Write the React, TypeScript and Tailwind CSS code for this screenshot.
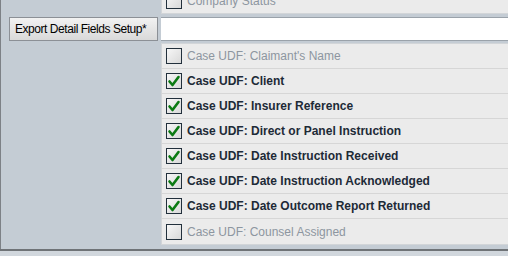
import React from "react";

type Field = { label: string; checked: boolean };

const fields: Field[] = [
  { label: "Case UDF: Claimant's Name", checked: false },
  { label: "Case UDF: Client", checked: true },
  { label: "Case UDF: Insurer Reference", checked: true },
  { label: "Case UDF: Direct or Panel Instruction", checked: true },
  { label: "Case UDF: Date Instruction Received", checked: true },
  { label: "Case UDF: Date Instruction Acknowledged", checked: true },
  { label: "Case UDF: Date Outcome Report Returned", checked: true },
  { label: "Case UDF: Counsel Assigned", checked: false },
];

function CheckBox({ checked }: { checked: boolean }) {
  return (
    <div className="w-[16px] h-[16px] shrink-0 border border-[#22303c] bg-gradient-to-br from-[#f7f7f7] to-[#d9d9d9] flex items-center justify-center">
      {checked && (
        <svg width="14" height="14" viewBox="0 0 14 14">
          <path d="M2.5 7.5 L5.5 11 L11.5 3" fill="none" stroke="#0b7a12" strokeWidth="2.6" strokeLinecap="round" strokeLinejoin="round" />
        </svg>
      )}
    </div>
  );
}

function Row({ label, checked, last }: Field & { last?: boolean }) {
  return (
    <div className={`h-[25px] flex items-center pl-[4px] ${last ? "" : "border-b border-[#d6d6d6]"}`}>
      <CheckBox checked={checked} />
      <span className={`ml-[5px] text-[12px] whitespace-nowrap ${checked ? "font-bold text-[#1d2a37]" : "text-[#8d96a0]"}`}>
        {label}
      </span>
    </div>
  );
}

export default function App() {
  return (
    <div className="w-[508px] h-[256px] overflow-hidden bg-[#c4ccd4] flex flex-col font-['Liberation_Sans',Arial,sans-serif]">
      <div className="h-[249px] shrink-0 border-l border-[#7d8186] flex flex-col">
        <div className="flex -mt-[12px]">
          <div className="w-[160px] shrink-0" />
          <div className="w-[360px] shrink-0 bg-[#ebebeb] border-l border-b border-[#d2d5d8]">
            <div className="h-[25px] flex items-center pl-[4px]">
              <CheckBox checked={false} />
              <span className="ml-[5px] text-[12px] text-[#8d96a0] whitespace-nowrap">Company Status</span>
            </div>
          </div>
        </div>

        <div className="flex mt-[3px] h-[24px]">
          <div className="w-[160px] shrink-0 pl-[8px]">
            <div className="w-[149px] h-[24px] border border-[#8c9096] bg-gradient-to-b from-[#f2f2f2] to-[#d9d9d9] flex items-center pl-[5px] text-[12px] tracking-[-0.45px] text-black whitespace-nowrap overflow-hidden">
              Export Detail Fields Setup*
            </div>
          </div>
          <div className="w-[360px] shrink-0 h-[24px] bg-white border-t border-b border-[#9aa2aa]" />
        </div>

        <div className="flex mt-[2px]">
          <div className="w-[160px] shrink-0" />
          <div className="w-[360px] shrink-0 bg-[#ebebeb] border-l border-t border-b border-[#d2d5d8]">
            {fields.map((f, i) => (
              <Row key={f.label} {...f} last={i === fields.length - 1} />
            ))}
          </div>
        </div>
      </div>
      <div className="h-[2px] shrink-0 bg-[#6f7377]" />
      <div className="flex-1 bg-[#d1d7dd]" />
    </div>
  );
}
